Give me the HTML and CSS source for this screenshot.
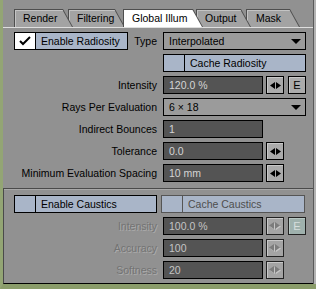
FILE: index.html
```html
<!DOCTYPE html>
<html lang="en">
	<head>
		<meta charset="UTF-8" />
		<meta name="viewport" content="width=device-width, initial-scale=1.0" />
		<title>Global Illum</title>
		<link rel="stylesheet" href="styles.css">
	</head>
	<body>
		<div class="window">
			<div class="tabs">
				<div class="tab tab-render"><span>Render</span></div>
				<div class="tab tab-filtering"><span>Filtering</span></div>
				<div class="tab tab-global active"><span>Global Illum</span></div>
				<div class="tab tab-output"><span>Output</span></div>
				<div class="tab tab-mask"><span>Mask</span></div>
			</div>

			<div class="panel">
				<div class="section upper">
					<div class="row">
						<div class="lead">
							<div class="toggle toggle-short">
								<span class="box checked">
									<svg width="20" height="16" viewBox="0 0 20 16"><path d="M5 8l3 3 7-7" fill="none" stroke="#000" stroke-width="2"/></svg>
								</span>
								<span class="toggle-label">Enable Radiosity</span>
							</div>
							<span class="lead-label">Type</span>
						</div>
						<div class="select">
							<span>Interpolated</span>
							<svg class="caret" width="10" height="5" viewBox="0 0 10 5"><path d="M0 0h10L5 5z"/></svg>
						</div>
					</div>

					<div class="row">
						<div class="lead"></div>
						<div class="toggle toggle-wide">
							<span class="box"></span>
							<span class="toggle-label">Cache Radiosity</span>
						</div>
					</div>

					<div class="row">
						<span class="label">Intensity</span>
						<div class="field">120.0 %</div>
						<div class="spin">
							<svg width="11" height="7" viewBox="0 0 11 7"><path d="M0 3.5 5 0v7z M6 0l5 3.5L6 7z"/></svg>
						</div>
						<div class="env">E</div>
					</div>

					<div class="row">
						<span class="label">Rays Per Evaluation</span>
						<div class="select">
							<span>6 × 18</span>
							<svg class="caret" width="10" height="5" viewBox="0 0 10 5"><path d="M0 0h10L5 5z"/></svg>
						</div>
					</div>

					<div class="row">
						<span class="label">Indirect Bounces</span>
						<div class="field">1</div>
					</div>

					<div class="row">
						<span class="label">Tolerance</span>
						<div class="field">0.0</div>
						<div class="spin">
							<svg width="11" height="7" viewBox="0 0 11 7"><path d="M0 3.5 5 0v7z M6 0l5 3.5L6 7z"/></svg>
						</div>
					</div>

					<div class="row">
						<span class="label">Minimum Evaluation Spacing</span>
						<div class="field">10 mm</div>
						<div class="spin">
							<svg width="11" height="7" viewBox="0 0 11 7"><path d="M0 3.5 5 0v7z M6 0l5 3.5L6 7z"/></svg>
						</div>
					</div>
				</div>

				<div class="section lower">
					<div class="row">
						<div class="toggle toggle-caustics">
							<span class="box"></span>
							<span class="toggle-label">Enable Caustics</span>
						</div>
						<div class="toggle toggle-cache disabled">
							<span class="box"></span>
							<span class="toggle-label">Cache Caustics</span>
						</div>
					</div>

					<div class="row disabled">
						<span class="label">Intensity</span>
						<div class="field">100.0 %</div>
						<div class="spin">
							<svg width="12" height="8" viewBox="0 0 12 8"><path class="hi" d="M1 4.5 6 1v7z M7 1l5 3.5L7 8z"/><path d="M0 3.5 5 0v7z M6 0l5 3.5L6 7z"/></svg>
						</div>
						<div class="env">E</div>
					</div>

					<div class="row disabled">
						<span class="label">Accuracy</span>
						<div class="field">100</div>
						<div class="spin">
							<svg width="12" height="8" viewBox="0 0 12 8"><path class="hi" d="M1 4.5 6 1v7z M7 1l5 3.5L7 8z"/><path d="M0 3.5 5 0v7z M6 0l5 3.5L6 7z"/></svg>
						</div>
					</div>

					<div class="row disabled">
						<span class="label">Softness</span>
						<div class="field">20</div>
						<div class="spin">
							<svg width="12" height="8" viewBox="0 0 12 8"><path class="hi" d="M1 4.5 6 1v7z M7 1l5 3.5L7 8z"/><path d="M0 3.5 5 0v7z M6 0l5 3.5L6 7z"/></svg>
						</div>
					</div>
				</div>
			</div>
		</div>
	</body>
</html>
```

FILE: styles.css
```css
body {
	margin: 0;
	background: #919191;
	font-family: "Liberation Sans", Arial, sans-serif;
	font-size: 10.5px;
	color: #000;
}
.window {
	width: 316px;
	height: 289px;
	box-sizing: border-box;
	border-left: 3px solid #93a574;
	border-bottom: 5px solid #8a9c6a;
	background: #919191;
	box-shadow: inset -2px 0 0 #b3b3b3, inset -3px 0 0 #5a5a5a;
	overflow: hidden;
}

/* tabs */
.tabs {
	display: flex;
	height: 18px;
	padding: 9px 0 0 11px;
}
.tab {
	position: relative;
	height: 18px;
	box-sizing: border-box;
	padding: 1px 0 0 1px;
	background: #4e4e4e;
	clip-path: polygon(0 0, calc(100% - 10px) 0, 100% 100%, 0 100%);
}
.tab span {
	display: block;
	height: 100%;
	padding-left: 8px;
	line-height: 17px;
	background: #a3a3a3;
	box-shadow: inset 1px 1px 0 #c4c4c4;
	clip-path: polygon(0 0, calc(100% - 10.5px) 0, calc(100% - 1px) 100%, 0 100%);
}
.tab.active span {
	background: #fff;
	box-shadow: none;
}
.tab-render { width: 59px; margin-right: -5px; z-index: 5; }
.tab-render span { padding-left: 8px; }
.tab-filtering { width: 57px; margin-right: -2px; z-index: 4; }
.tab-global { width: 80px; margin-right: -7px; z-index: 10; }
.tab-output { width: 55px; margin-right: -5px; z-index: 2; }
.tab-mask { width: 54px; z-index: 1; }
.tab-mask span { padding-left: 9px; }

/* panel */
.panel {
	width: 310px;
	border-top: 1px solid #dedede;
}
.upper {
	padding: 4px 0 6px 11px;
}
.lower {
	padding: 6px 0 4px 10px;
	border-top: 1px solid #4a4a4a;
	border-left: 1px solid #4a4a4a;
	border-bottom: 1px solid #000;
	box-shadow: inset 0 1px 0 #a8a8a8;
}
.row {
	display: flex;
	height: 18px;
	margin-bottom: 4px;
}
.row:last-child {
	margin-bottom: 0;
}
.lead {
	display: flex;
	width: 143px;
	margin-right: 6px;
}
.lead-label {
	flex: 1;
	text-align: right;
	line-height: 18px;
}
.label {
	width: 143px;
	margin-right: 6px;
	text-align: right;
	line-height: 18px;
	white-space: nowrap;
}

/* toggle buttons */
.toggle {
	display: flex;
	box-sizing: border-box;
	border: 1px solid #000;
	background: #a9b5c8;
}
.toggle .box {
	width: 20px;
	border-right: 1px solid #000;
	display: flex;
	align-items: center;
	justify-content: center;
}
.toggle .box.checked {
	background: #fff;
}
.toggle-label {
	padding-left: 5px;
	line-height: 16px;
	white-space: nowrap;
}
.toggle-short { width: 114px; }
.toggle-wide { width: 143px; }
.toggle-caustics { width: 143px; margin-right: 4px; }
.toggle-cache { width: 144px; }
.toggle.disabled {
	border-color: #555;
}
.toggle.disabled .box {
	border-right-color: #555;
}
.toggle.disabled .toggle-label {
	color: #4e4e4e;
}

/* dropdowns */
.select {
	display: flex;
	align-items: center;
	justify-content: space-between;
	width: 143px;
	box-sizing: border-box;
	border: 1px solid #000;
	background: #9b9b9b;
	padding: 0 4px 0 5px;
}
.caret {
	fill: #000;
}

/* fields and small buttons */
.field {
	width: 100px;
	box-sizing: border-box;
	border: 1px solid #000;
	background: #545454;
	color: #d4d4d4;
	padding-left: 5px;
	line-height: 16px;
}
.spin {
	width: 18px;
	margin-left: 3px;
	box-sizing: border-box;
	border: 1px solid #000;
	background: #ababab;
	box-shadow: inset 1px 1px 0 #c8c8c8;
	display: flex;
	align-items: center;
	justify-content: center;
}
.spin svg {
	fill: #000;
}
.env {
	width: 18px;
	margin-left: 4px;
	box-sizing: border-box;
	border: 1px solid #000;
	background: #ababab;
	box-shadow: inset 1px 1px 0 #c8c8c8;
	text-align: center;
	line-height: 16px;
	font-size: 11px;
}

/* disabled rows */
.row.disabled .label {
	color: #737373;
	text-shadow: 1px 1px 0 #acacac;
}
.row.disabled .field {
	color: #c4c4c4;
}
.row.disabled .spin {
	border-color: #222;
	background: #a4a4a4;
}
.row.disabled .spin svg {
	fill: #7c7c7c;
}
.row.disabled .spin svg .hi {
	fill: #c6c6c6;
}
.row.disabled .env {
	border-color: #222;
	background: #9fb1ad;
	color: #d6dedd;
	box-shadow: inset 1px 1px 0 #b8c8c4;
}
```
